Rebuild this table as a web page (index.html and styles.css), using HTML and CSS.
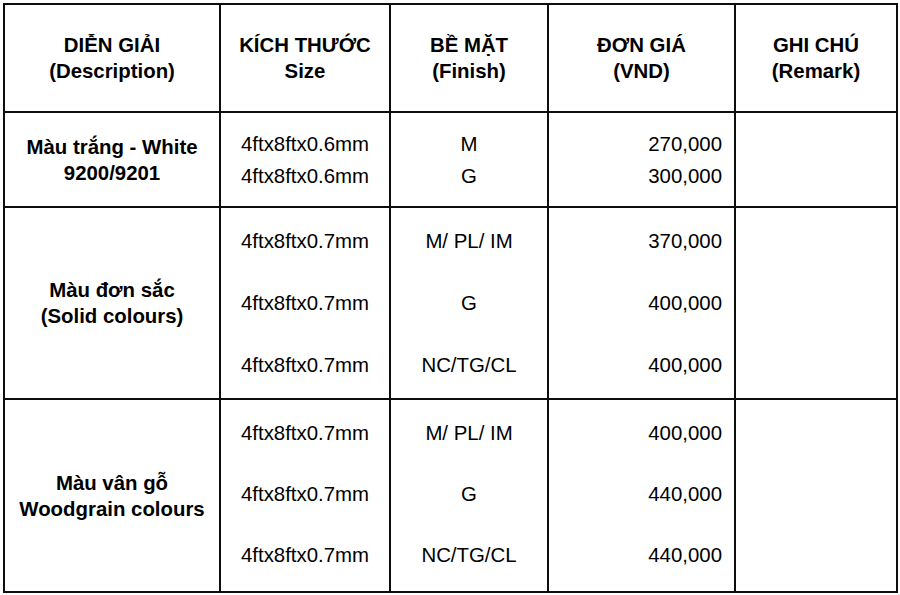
FILE: index.html
```html
<!DOCTYPE html>
<html lang="vi">
<head>
<meta charset="utf-8">
<title>Bảng giá</title>
<link rel="stylesheet" href="styles.css">
</head>
<body>
<div class="sheet">
  <div class="cell head">DIỄN GIẢI<br>(Description)</div>
  <div class="cell head">KÍCH THƯỚC<br>Size</div>
  <div class="cell head">BỀ MẶT<br>(Finish)</div>
  <div class="cell head">ĐƠN GIÁ<br>(VND)</div>
  <div class="cell head">GHI CHÚ<br>(Remark)</div>

  <div class="cell desc">Màu trắng - White<br>9200/9201</div>
  <div class="cell size"><div class="lines pair"><span>4ftx8ftx0.6mm</span><span>4ftx8ftx0.6mm</span></div></div>
  <div class="cell finish"><div class="lines pair"><span>M</span><span>G</span></div></div>
  <div class="cell price"><div class="lines pair"><span>270,000</span><span>300,000</span></div></div>
  <div class="cell"></div>

  <div class="cell desc">Màu đơn sắc<br>(Solid colours)</div>
  <div class="cell size"><div class="lines triple"><span>4ftx8ftx0.7mm</span><span>4ftx8ftx0.7mm</span><span>4ftx8ftx0.7mm</span></div></div>
  <div class="cell finish"><div class="lines triple"><span>M/ PL/ IM</span><span>G</span><span>NC/TG/CL</span></div></div>
  <div class="cell price"><div class="lines triple"><span>370,000</span><span>400,000</span><span>400,000</span></div></div>
  <div class="cell"></div>

  <div class="cell desc">Màu vân gỗ<br>Woodgrain colours</div>
  <div class="cell size"><div class="lines triple up"><span>4ftx8ftx0.7mm</span><span>4ftx8ftx0.7mm</span><span>4ftx8ftx0.7mm</span></div></div>
  <div class="cell finish"><div class="lines triple up"><span>M/ PL/ IM</span><span>G</span><span>NC/TG/CL</span></div></div>
  <div class="cell price"><div class="lines triple up"><span>400,000</span><span>440,000</span><span>440,000</span></div></div>
  <div class="cell"></div>
</div>
</body>
</html>
```

FILE: styles.css
```css
html, body {
  margin: 0;
  padding: 0;
  background: #ffffff;
}

body {
  font-family: "Liberation Sans", Arial, sans-serif;
  font-size: 20.4px;
  color: #000000;
}

.sheet {
  margin: 3px 0 0 3px;
  width: 895px;
  display: grid;
  grid-template-columns: 216px 170px 158px 187px 162px;
  grid-template-rows: 108px 95px 192px 193px;
  border-left: 2px solid #0d0d0d;
  border-top: 2px solid #0d0d0d;
  box-sizing: border-box;
}

.cell {
  border-right: 2px solid #0d0d0d;
  border-bottom: 2px solid #0d0d0d;
  display: flex;
  align-items: center;
  box-sizing: border-box;
  min-width: 0;
}

.head {
  font-weight: bold;
  justify-content: center;
  text-align: center;
  line-height: 26px;
}

.desc {
  font-weight: bold;
  justify-content: center;
  text-align: center;
  line-height: 26px;
}

.lines {
  display: flex;
  flex-direction: column;
  width: 100%;
}

.pair {
  line-height: 32px;
}

.triple {
  line-height: 31px;
  gap: 31px;
}

.up {
  gap: 30px;
  margin-top: -2px;
}

.size {
  padding-left: 20px;
}

.finish .lines {
  text-align: center;
}

.price {
  padding-right: 12px;
}

.price .lines {
  text-align: right;
}
```
